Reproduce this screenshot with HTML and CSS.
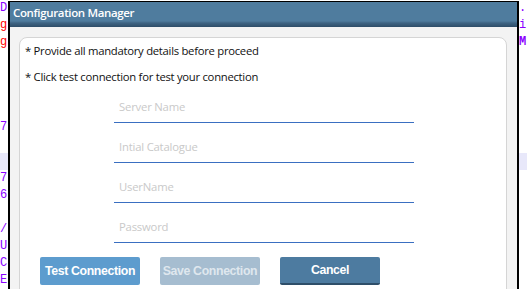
FILE: index.html
```html
<!DOCTYPE html>
<html>
<head>
<meta charset="utf-8">
<link rel="stylesheet" href="styles.css">
</head>
<body>
<div class="code">
  <div class="ln"><span class="l p">DI</span><span class="r p">.'</span></div>
  <div class="ln"><span class="l red">g"</span><span class="r p">i</span></div>
  <div class="ln"><span class="l red">g"</span><span class="r p b">M</span></div>
  <div class="ln"><span class="l"></span><span class="r"></span></div>
  <div class="ln"><span class="l"></span><span class="r"></span></div>
  <div class="ln"><span class="l"></span><span class="r"></span></div>
  <div class="ln"><span class="l"></span><span class="r"></span></div>
  <div class="ln"><span class="l p">7'</span><span class="r"></span></div>
  <div class="ln"><span class="l"></span><span class="r"></span></div>
  <div class="ln hl"><span class="l"></span><span class="r"></span></div>
  <div class="ln"><span class="l p">7</span><span class="r"></span></div>
  <div class="ln"><span class="l p">6I</span><span class="r"></span></div>
  <div class="ln"><span class="l"></span><span class="r"></span></div>
  <div class="ln"><span class="l p">/:</span><span class="r"></span></div>
  <div class="ln"><span class="l p">U-</span><span class="r"></span></div>
  <div class="ln"><span class="l p">CI</span><span class="r"></span></div>
  <div class="ln"><span class="l p">E:</span><span class="r"></span></div>
</div>

<div class="dialog">
  <div class="titlebar">Configuration Manager</div>
  <div class="body">
    <div class="panel">
      <p class="note">* Provide all mandatory details before proceed</p>
      <p class="note">* Click test connection for test your connection</p>
      <div class="fields">
        <div class="field">Server Name</div>
        <div class="field">Intial Catalogue</div>
        <div class="field">UserName</div>
        <div class="field">Password</div>
      </div>
      <div class="buttons">
        <div class="btn test">Test Connection</div>
        <div class="btn save">Save Connection</div>
        <div class="btn cancel">Cancel</div>
      </div>
    </div>
  </div>
</div>
</body>
</html>
```
FILE: styles.css
```css
html, body {
  margin: 0;
  padding: 0;
  width: 527px;
  height: 289px;
  overflow: hidden;
  background: #ffffff;
}

.code {
  font-family: "Liberation Mono", "DejaVu Sans Mono", monospace;
  font-size: 12px;
  line-height: 17px;
  height: 289px;
  overflow: hidden;
}

.ln {
  display: flex;
  height: 17px;
}

.ln.hl {
  background: #e8e8fa;
}

.l {
  width: 519px;
  flex: none;
}

.r {
  flex: none;
  width: 8px;
  overflow: hidden;
  white-space: nowrap;
}

.p { color: #8a00ff; }
.red { color: #ff0000; }
.b { font-weight: bold; }

.dialog {
  position: absolute;
  left: 8px;
  top: 1px;
  width: 507px;
  height: 288px;
  overflow: hidden;
  border: 2px solid #000;
  border-top-width: 1px;
  border-bottom: 0;
  background: #f3f3f3;
  font-family: "Open Sans", "Noto Sans", sans-serif;
}

.titlebar {
  height: 25px;
  box-sizing: border-box;
  padding: 3px 0 0 3px;
  background: linear-gradient(to bottom, #4f7c9e 0px, #4f7c9e 19px, #3e6483 21px, #2e4d68 25px);
  color: #ffffff;
  font-size: 11.5px;
  font-weight: 600;
  line-height: 16px;
  letter-spacing: -0.35px;
}

.body {
  padding: 10px 10px 0 9px;
}

.panel {
  background: #ffffff;
  border: 1px solid #d5d5d5;
  border-radius: 8px;
  height: 300px;
  padding: 5px 0 0 5px;
}

.note {
  margin: 0;
  height: 26px;
  font-size: 11.3px;
  line-height: 16px;
  letter-spacing: -0.28px;
  color: #111;
}

.fields {
  display: flex;
  flex-direction: column;
  gap: 12px;
  margin: 0 0 0 89px;
  width: 300px;
}

.field {
  height: 23px;
  border-bottom: 1px solid #3a6fc1;
  padding: 4px 0 0 5px;
  font-size: 11.3px;
  line-height: 16px;
  letter-spacing: -0.2px;
  color: #c9c9c9;
}

.buttons {
  display: flex;
  gap: 20px;
  margin: 14px 0 0 15px;
}

.btn {
  width: 100px;
  height: 28px;
  box-sizing: border-box;
  border-radius: 2px;
  font-family: "Liberation Sans", Arial, sans-serif;
  font-weight: bold;
  font-size: 12.3px;
  letter-spacing: -0.35px;
  line-height: 28px;
  text-align: center;
  color: #ffffff;
}

.test {
  background: #5d9cce;
}

.save {
  background: #a6bdd0;
  color: #dfe7ee;
}

.cancel {
  background: #4d7ba0;
  border-bottom: 2px solid #2e4e69;
  line-height: 27px;
}
```
